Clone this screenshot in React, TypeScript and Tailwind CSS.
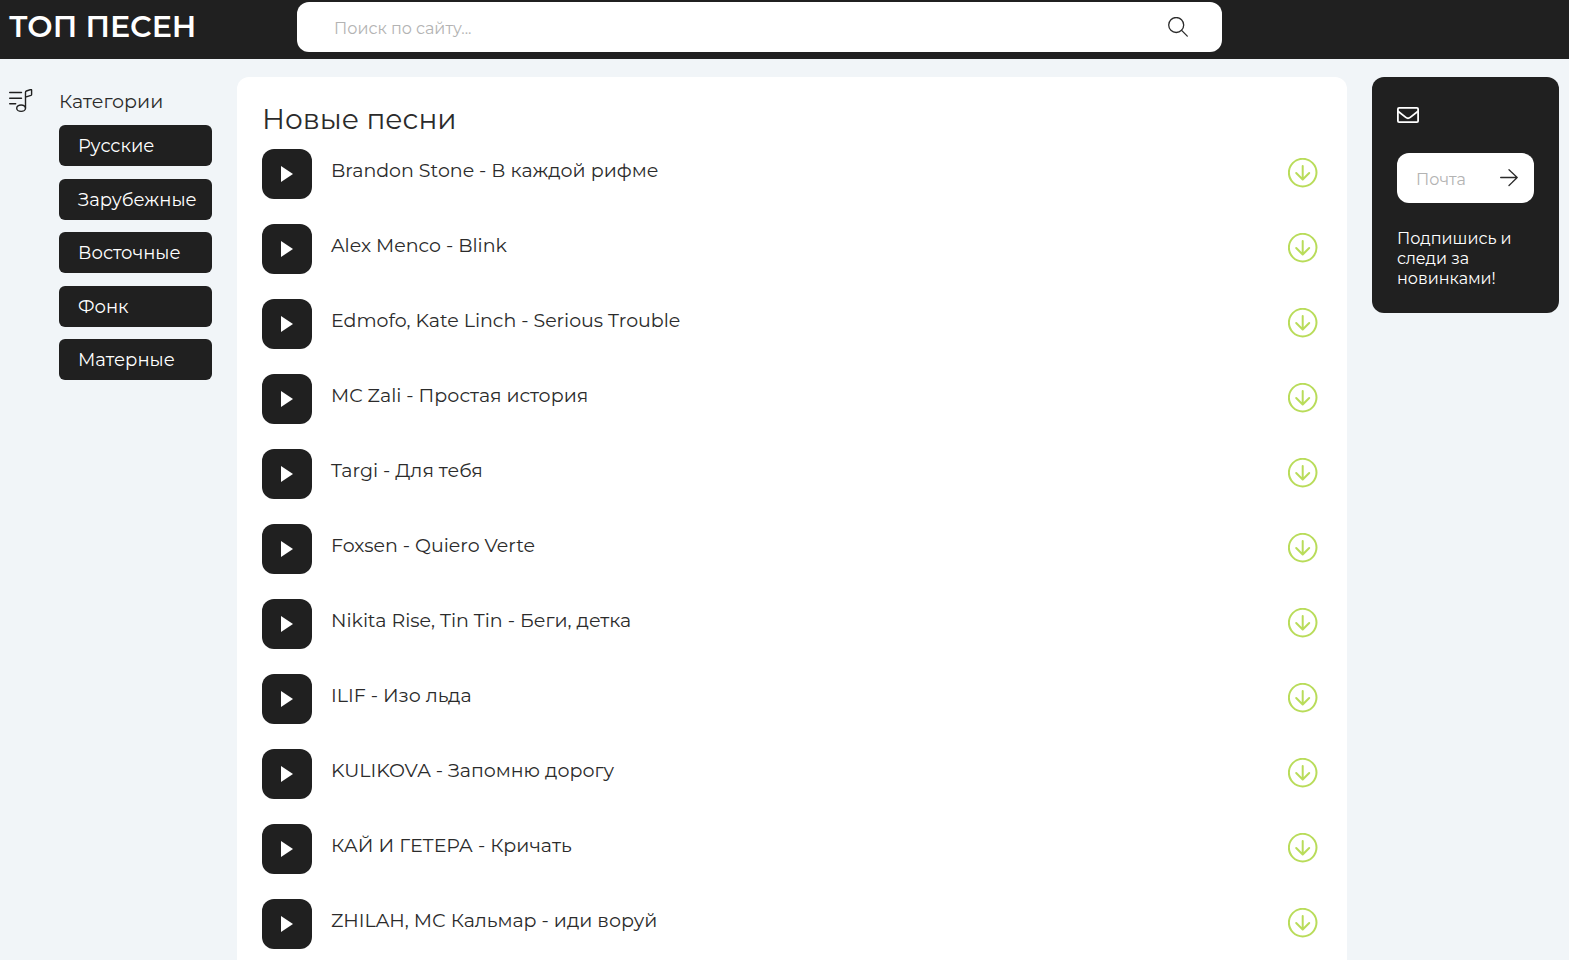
import React, { useState } from "react";

type IconProps = {
  className?: string;
};

const categories = ["Русские", "Зарубежные", "Восточные", "Фонк", "Матерные"];

const songs = [
  "Brandon Stone - В каждой рифме",
  "Alex Menco - Blink",
  "Edmofo, Kate Linch - Serious Trouble",
  "MC Zali - Простая история",
  "Targi - Для тебя",
  "Foxsen - Quiero Verte",
  "Nikita Rise, Tin Tin - Беги, детка",
  "ILIF - Изо льда",
  "KULIKOVA - Запомню дорогу",
  "КАЙ И ГЕТЕРА - Кричать",
  "ZHILAH, МС Кальмар - иди воруй",
];

const SearchIcon: React.FC<IconProps> = ({ className }) => (
  <svg viewBox="0 0 20 20" fill="none" stroke="currentColor" strokeWidth="1.3" strokeLinecap="round" className={className}>
    <circle cx="8.2" cy="8" r="7.5" />
    <path d="M13.6 13.4l5.7 5.7" />
  </svg>
);

const ArrowIcon: React.FC<IconProps> = ({ className }) => (
  <svg viewBox="0 0 18 18" fill="none" stroke="currentColor" strokeWidth="1.3" strokeLinecap="round" strokeLinejoin="round" className={className}>
    <path d="M.7 8.5h16.5M9 .7l8.200 7.800L9 16.500" />
  </svg>
);

const MusicListIcon: React.FC<IconProps> = ({ className }) => (
  <svg viewBox="0 0 24 24" fill="none" stroke="currentColor" strokeWidth="1.4" strokeLinecap="round" strokeLinejoin="round" className={className}>
    <path d="M.7 3.500H12.500M.7 9.300H12.500M.7 14.800h6" />
    <path d="M16.500 19V3.200c0-.6.3-1 .9-1.200l4.300-1.500c.5-.2.9.1.9.6v4.300c0 .5-.2.8-.7 1L16.500 8.200" />
    <ellipse cx="12.100" cy="19.200" rx="4.400" ry="3.200" />
  </svg>
);

const MailIcon: React.FC<IconProps> = ({ className }) => (
  <svg viewBox="0 0 22 16" fill="none" stroke="currentColor" strokeWidth="1.8" strokeLinejoin="round" className={className}>
    <rect x=".9" y=".9" width="20.200" height="14.200" rx="1.200" />
    <path d="M1 4.200l7.800 6.200c1.600 1.300 2.800 1.300 4.400 0L21 4.200" />
  </svg>
);

const PlayIcon: React.FC<IconProps> = ({ className }) => (
  <svg viewBox="0 0 12 16" fill="currentColor" className={className}>
    <path d="M0 0l12 8-12 8z" />
  </svg>
);

const DownloadIcon: React.FC<IconProps> = ({ className }) => (
  <svg viewBox="0 0 30 30" fill="none" stroke="currentColor" strokeWidth="2" strokeLinecap="round" strokeLinejoin="round" className={className}>
    <circle cx="14.700" cy="14.600" r="13.800" />
    <path d="M14.700 8v13.200M8.200 15l6.500 6.500 6.500-6.500" />
  </svg>
);

const App: React.FC = () => {
  const [query, setQuery] = useState("");
  const [email, setEmail] = useState("");

  return (
    <div className="min-h-screen bg-[#f1f5f8] font-['Montserrat','Inter',sans-serif] text-[#2b2b2b]">
      {/* Header */}
      <header className="flex items-start bg-[#202020] pt-0.5 pb-[7px]">
        <a href="#" className="w-[297px] shrink-0 pl-[9px] text-[30px] leading-[50px] font-semibold whitespace-nowrap text-white">
          ТОП ПЕСЕН
        </a>
        <form
          className="mr-[347px] flex h-[50px] min-w-0 flex-1 items-center rounded-xl bg-white pr-[34px] pl-[37px]"
          onSubmit={(e) => e.preventDefault()}
        >
          <input
            type="search"
            aria-label="Поиск по сайту"
            placeholder="Поиск по сайту..."
            className="min-w-0 flex-1 pt-1 text-base outline-none placeholder:text-[#b3b3b3]"
            value={query}
            onChange={(e) => setQuery(e.target.value)}
          />
          <button type="submit" aria-label="Найти">
            <SearchIcon className="size-5" />
          </button>
        </form>
      </header>

      <div className="flex items-start gap-[25px] pt-[18px] pr-2.5 pl-[9px]">
        {/* Categories */}
        <nav className="flex shrink-0 gap-[26px] pt-3">
          <MusicListIcon className="size-6 text-[#202020]" />
          <div className="w-[153px]">
            <h2 className="text-[19px] leading-[26px]">Категории</h2>
            <ul className="mt-2.5 flex h-[255px] flex-col justify-between">
              {categories.map((name) => (
                <li key={name}>
                  <a href="#" className="block rounded-md bg-[#202020] px-[19px] pt-px text-[18px] leading-10 text-white">
                    {name}
                  </a>
                </li>
              ))}
            </ul>
          </div>
        </nav>

        {/* Songs */}
        <main className="min-w-0 flex-1 rounded-xl bg-white px-[25px] py-6">
          <h1 className="text-[28px] leading-9">Новые песни</h1>
          <ul className="mt-3 space-y-[25px]">
            {songs.map((song) => (
              <li key={song} className="flex h-[50px] items-start">
                <button
                  aria-label={`Слушать ${song}`}
                  className="flex size-[50px] shrink-0 items-center justify-center rounded-xl bg-[#202020] text-white"
                >
                  <PlayIcon className="h-4 w-3" />
                </button>
                <span className="ml-[19px] flex-1 pt-2.5 text-[19px] leading-6">{song}</span>
                <a href="#" aria-label={`Скачать ${song}`} className="mr-1 pt-[9px] text-[#b9dc5a]">
                  <DownloadIcon className="size-[30px]" />
                </a>
              </li>
            ))}
          </ul>
        </main>

        {/* Subscription */}
        <aside className="w-[187px] shrink-0 rounded-xl bg-[#202020] px-[25px] pt-[30px] pb-6 text-white">
          <MailIcon className="h-4 w-[22px]" />
          <form
            className="mt-[30px] flex h-[50px] items-center rounded-xl bg-white pr-4 pl-[19px] text-[#2b2b2b]"
            onSubmit={(e) => e.preventDefault()}
          >
            <input
              type="email"
              aria-label="Почта"
              placeholder="Почта"
              className="min-w-0 flex-1 pt-1 text-base outline-none placeholder:text-[#b3b3b3]"
              value={email}
              onChange={(e) => setEmail(e.target.value)}
            />
            <button type="submit" aria-label="Подписаться">
              <ArrowIcon className="size-[18px]" />
            </button>
          </form>
          <p className="mt-[26px] text-base leading-5">Подпишись и следи за новинками!</p>
        </aside>
      </div>
    </div>
  );
};

export default App;
